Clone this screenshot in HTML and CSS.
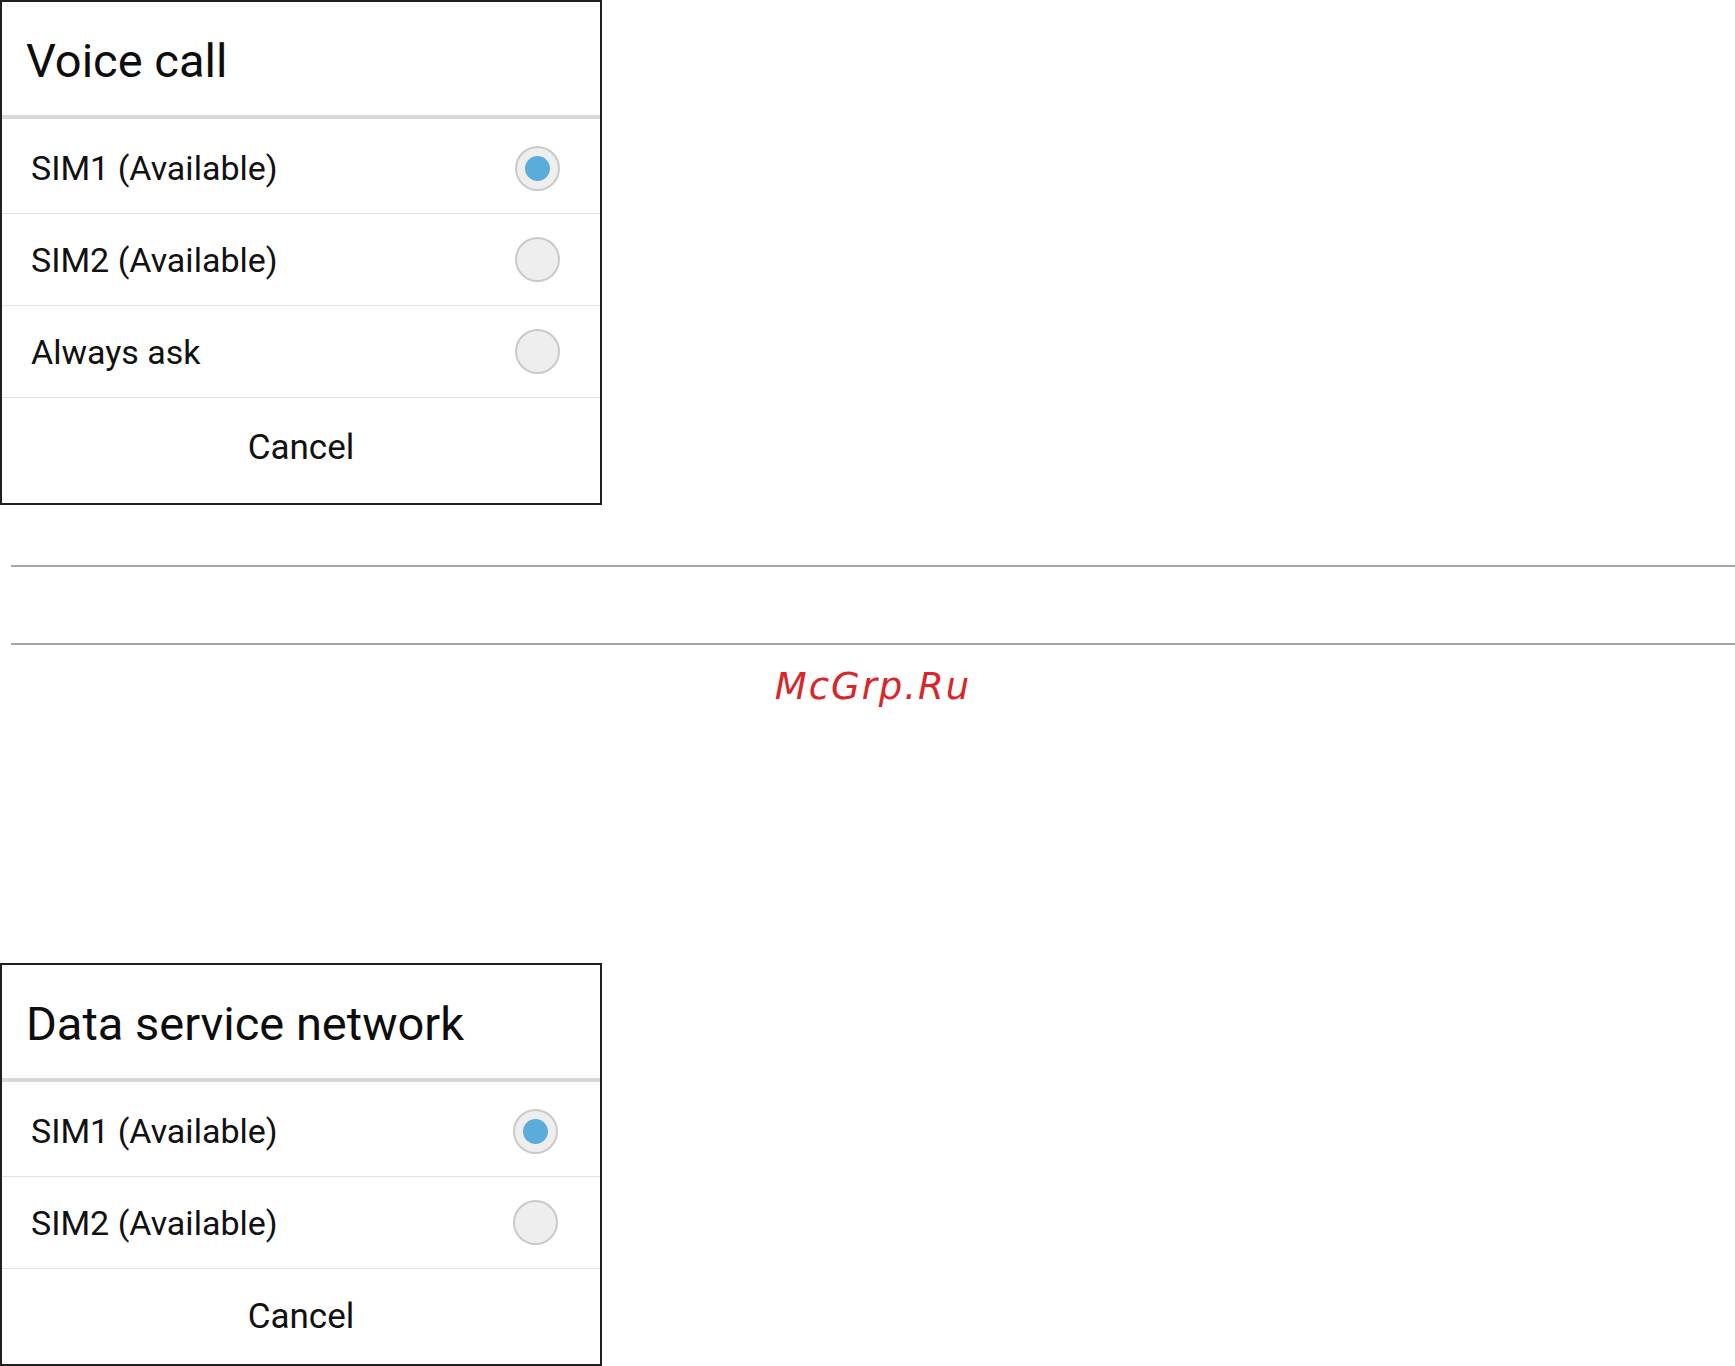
FILE: index.html
```html
<!DOCTYPE html>
<html lang="en">

<head>
    <meta charset="UTF-8">
    <meta name="viewport" content="width=device-width, initial-scale=1.0">
    <title>SIM settings</title>
    <link rel="stylesheet" href="styles.css">
</head>

<body>
    <!-- Voice call dialog -->
    <div class="dialog">
        <div class="dialog-title">Voice call</div>
        <ul class="options">
            <li class="option"><span>SIM1 (Available)</span><span class="radio checked"></span></li>
            <li class="option"><span>SIM2 (Available)</span><span class="radio"></span></li>
            <li class="option"><span>Always ask</span><span class="radio"></span></li>
        </ul>
        <div class="dialog-cancel">Cancel</div>
    </div>

    <div class="rules">
        <div class="rule"></div>
        <div class="rule rule-second"></div>
        <div class="watermark">McGrp.Ru</div>
    </div>

    <!-- Data service network dialog -->
    <div class="dialog dialog-data">
        <div class="dialog-title">Data service network</div>
        <ul class="options">
            <li class="option"><span>SIM1 (Available)</span><span class="radio checked"></span></li>
            <li class="option"><span>SIM2 (Available)</span><span class="radio"></span></li>
        </ul>
        <div class="dialog-cancel">Cancel</div>
    </div>
</body>

</html>
```

FILE: styles.css
```css
body {
    font-family: Roboto, "Liberation Sans", sans-serif;
    margin: 0;
    padding: 0;
    background-color: #fff;
    color: #111;
}

.dialog {
    width: 602px;
    box-sizing: border-box;
    border: 2px solid #231f20;
    background-color: #fff;
}

.dialog-title {
    height: 117px;
    box-sizing: border-box;
    padding: 4px 0 0 24px;
    line-height: 109px;
    font-size: 47px;
    border-bottom: 4px solid #d8d8d8;
    color: #0d0d0d;
}

.options {
    list-style: none;
    margin: 0;
    padding: 0;
}

.option {
    display: flex;
    align-items: center;
    justify-content: space-between;
    height: 91px;
    padding: 0 40px 0 29px;
    font-size: 34px;
    border-bottom: 1px solid #e4e4e4;
}

.option:first-child {
    height: 90px;
    padding-top: 4px;
}

.radio {
    width: 45px;
    height: 45px;
    box-sizing: border-box;
    border: 2px solid #cacaca;
    border-radius: 50%;
    background-color: #eeeeee;
    display: flex;
    justify-content: center;
    align-items: center;
}

.radio.checked::after {
    content: "";
    width: 25px;
    height: 25px;
    border-radius: 50%;
    background-color: #5aacdb;
}

.dialog-cancel {
    height: 105px;
    box-sizing: border-box;
    padding-bottom: 6px;
    display: flex;
    justify-content: center;
    align-items: center;
    font-size: 35px;
}

.rules {
    margin: 60px 0 0 11px;
}

.rule {
    height: 2px;
    background-color: #a6a6a6;
}

.rule-second {
    margin-top: 76px;
}

.watermark {
    margin-top: 20px;
    text-align: center;
    font-family: "DejaVu Sans", sans-serif;
    font-style: italic;
    font-size: 37px;
    line-height: 44px;
    letter-spacing: 2px;
    color: #d8262a;
}

.dialog-data {
    margin-top: 254px;
}

.dialog-data .option {
    padding-right: 42px;
}

.dialog-data .dialog-cancel {
    height: 95px;
    padding-bottom: 0;
}
```
